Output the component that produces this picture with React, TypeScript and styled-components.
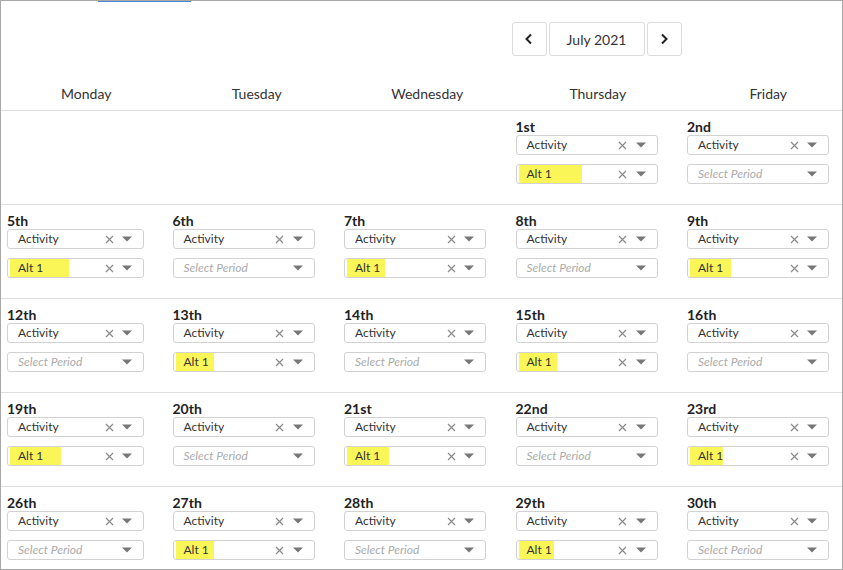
import React from 'react';
import styled, { createGlobalStyle } from 'styled-components';

const GlobalStyle = createGlobalStyle`
    html, body {
        margin: 0;
        padding: 0;
        background: #fff;
    }
    * {
        box-sizing: border-box;
    }
`

const Frame = styled.div`
    position: relative;
    width: 843px;
    height: 570px;
    border: 1px solid #a8a8a8;
    overflow: hidden;
    font-family: Lato, "Open Sans", sans-serif;
    color: #333;
`

const TabMark = styled.div`
    position: absolute;
    top: -1px;
    left: 97px;
    width: 93px;
    height: 2px;
    background: #4a86d8;
`

const Toolbar = styled.div`
    display: grid;
    grid-template-columns: repeat(5, 170.5px);
    padding-top: 21px;
`

const Nav = styled.div`
    grid-column: 4;
    display: flex;
    margin-left: -1px;
    gap: 2px;
`

const NavButton = styled.button`
    width: 35px;
    height: 34px;
    border: 1px solid #dcdcdc;
    border-radius: 3px;
    background: #fff;
    display: flex;
    align-items: center;
    justify-content: center;
    padding: 0;
`

const MonthLabel = styled.div`
    width: 96px;
    height: 34px;
    border: 1px solid #dcdcdc;
    border-radius: 3px;
    display: flex;
    align-items: center;
    justify-content: center;
    font-size: 14px;
    color: #333;
`

const WeekHeader = styled.div`
    display: grid;
    grid-template-columns: repeat(5, 170.5px);
    margin-top: 28px;
    padding-bottom: 6px;
    border-bottom: 1px solid #dedede;
`

const WeekDay = styled.div`
    text-align: center;
    font-size: 14px;
    line-height: 20px;
    color: #333;
`

const WeekRow = styled.div`
    display: grid;
    grid-template-columns: repeat(5, 171.5px);
    height: 94px;
    border-bottom: 1px solid #dedede;
`

const DayCell = styled.div<{ $first?: boolean }>`
    padding-top: 8px;
    padding-left: ${p => p.$first ? '6px' : '0'};
    display: flex;
    flex-direction: column;
    gap: 9px;
`

const DayTop = styled.div`
    display: flex;
    flex-direction: column;
`

const DayLabel = styled.div`
    font-size: 14px;
    font-weight: 700;
    line-height: 16px;
    color: #222;
`

const SelectBox = styled.div<{ $width: number }>`
    width: ${p => p.$width}px;
    height: 20px;
    border: 1px solid #d2d2d2;
    border-radius: 3px;
    display: flex;
    align-items: stretch;
    background: #fff;
    padding-right: 7px;
`

const ValueArea = styled.div`
    flex: 1;
    display: flex;
    align-items: stretch;
    min-width: 0;
`

const Value = styled.span<{ $placeholder?: boolean }>`
    padding-left: 10px;
    font-size: 12px;
    line-height: 18px;
    color: ${p => p.$placeholder ? '#ababab' : '#333'};
    font-style: ${p => p.$placeholder ? 'italic' : 'normal'};
    white-space: nowrap;
`

const Highlight = styled.span`
    margin-left: 2px;
    padding-left: 8px;
    font-size: 12px;
    line-height: 18px;
    color: #333;
    background: #fbf658;
    white-space: nowrap;
`

const IconSlot = styled.span`
    width: 18px;
    display: flex;
    align-items: center;
    justify-content: center;
`

const ClearIcon = () => (
    <svg width="9" height="9" viewBox="0 0 9 9">
        <path d="M1 1L8 8M8 1L1 8" stroke="#8a8a8a" strokeWidth="1.2" />
    </svg>
)

const ArrowIcon = () => (
    <svg width="10" height="6" viewBox="0 0 10 6">
        <path d="M0 0.5H10L5 5.5Z" fill="#777" />
    </svg>
)

const Chevron = ({ dir }: { dir: 'left' | 'right' }) => (
    <svg width="10" height="12" viewBox="0 0 10 12">
        <path
            d={dir === 'left' ? 'M7 1.5L2.5 6L7 10.5' : 'M3 1.5L7.5 6L3 10.5'}
            stroke="#222"
            strokeWidth="2"
            fill="none"
        />
    </svg>
)

type Day = {
    label: string;
    alt?: number;
}

type SelectProps = {
    width: number;
    value?: string;
    highlight?: number;
    placeholder?: string;
}

function Select({ width, value, highlight, placeholder }: SelectProps) {
    return (
        <SelectBox $width={width}>
            <ValueArea>
                {highlight
                    ? <Highlight style={{ width: highlight }}>{value}</Highlight>
                    : value
                        ? <Value>{value}</Value>
                        : <Value $placeholder>{placeholder}</Value>}
            </ValueArea>
            {value && <IconSlot><ClearIcon /></IconSlot>}
            <IconSlot><ArrowIcon /></IconSlot>
        </SelectBox>
    )
}

const weekDays = ['Monday', 'Tuesday', 'Wednesday', 'Thursday', 'Friday'];

const weeks: (Day | null)[][] = [
    [null, null, null, { label: '1st', alt: 63 }, { label: '2nd' }],
    [{ label: '5th', alt: 59 }, { label: '6th' }, { label: '7th', alt: 38 }, { label: '8th' }, { label: '9th', alt: 41 }],
    [{ label: '12th' }, { label: '13th', alt: 38 }, { label: '14th' }, { label: '15th', alt: 38 }, { label: '16th' }],
    [{ label: '19th', alt: 51 }, { label: '20th' }, { label: '21st', alt: 42 }, { label: '22nd' }, { label: '23rd', alt: 33 }],
    [{ label: '26th' }, { label: '27th', alt: 38 }, { label: '28th' }, { label: '29th', alt: 35 }, { label: '30th' }],
];

export default function App() {
    return (
        <>
            <GlobalStyle />
            <Frame>
                <TabMark />
                <Toolbar>
                    <Nav>
                        <NavButton><Chevron dir="left" /></NavButton>
                        <MonthLabel>July 2021</MonthLabel>
                        <NavButton><Chevron dir="right" /></NavButton>
                    </Nav>
                </Toolbar>
                <WeekHeader>
                    {weekDays.map(d => <WeekDay key={d}>{d}</WeekDay>)}
                </WeekHeader>
                {weeks.map((week, wi) => (
                    <WeekRow key={wi}>
                        {week.map((day, di) => {
                            const width = di === 0 ? 137 : 142;
                            if (!day) return <DayCell key={di} $first={di === 0} />
                            return (
                                <DayCell key={di} $first={di === 0}>
                                    <DayTop>
                                        <DayLabel>{day.label}</DayLabel>
                                        <Select width={width} value="Activity" />
                                    </DayTop>
                                    {day.alt
                                        ? <Select width={width} value="Alt 1" highlight={day.alt} />
                                        : <Select width={width} placeholder="Select Period" />}
                                </DayCell>
                            )
                        })}
                    </WeekRow>
                ))}
            </Frame>
        </>
    )
}
